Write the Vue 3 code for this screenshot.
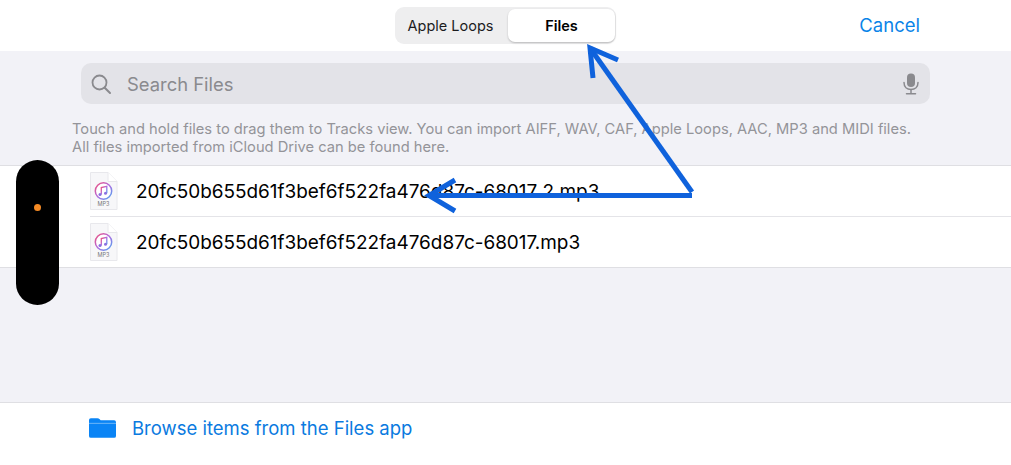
<template>
  <div class="screen">
    <header class="topbar">
      <div class="segment">
        <div class="seg-item">Apple Loops</div>
        <div class="seg-item active">Files</div>
      </div>
      <button class="cancel">Cancel</button>
    </header>

    <main class="content">
      <div class="search">
        <svg class="search-icon" width="22" height="22" viewBox="0 0 22 22" fill="none">
          <circle cx="9.5" cy="9.5" r="7" stroke="#8a8a8e" stroke-width="1.8" />
          <path d="M14.7 14.7 L20 20" stroke="#8a8a8e" stroke-width="2" stroke-linecap="round" />
        </svg>
        <span class="search-text">Search Files</span>
        <svg class="mic" width="16" height="22" viewBox="0 0 16 22" fill="none">
          <rect x="4" y="0.5" width="8" height="13.5" rx="4" fill="#8a8a8e" />
          <path d="M1 9.5 C1 14 4 16.5 8 16.5 C12 16.5 15 14 15 9.5" stroke="#8a8a8e" stroke-width="1.5" stroke-linecap="round" />
          <path d="M8 16.5 V20.5 M3.5 20.8 H12.5" stroke="#8a8a8e" stroke-width="1.5" stroke-linecap="round" />
        </svg>
      </div>

      <p class="hint">
        Touch and hold files to drag them to Tracks view. You can import AIFF, WAV, CAF, Apple Loops, AAC, MP3 and MIDI files.<br>
        All files imported from iCloud Drive can be found here.
      </p>

      <ul class="files">
        <li v-for="name in files" :key="name" class="file-row">
          <svg class="file-icon" width="28" height="38" viewBox="0 0 28 38">
            <defs>
              <linearGradient id="note" x1="0" y1="0" x2="1" y2="1">
                <stop offset="0" stop-color="#f0507a" />
                <stop offset="0.5" stop-color="#b06ae0" />
                <stop offset="1" stop-color="#4aa8f0" />
              </linearGradient>
            </defs>
            <path d="M0.5 0.5 H18 L27 9.5 V37.5 H0.5 Z" fill="#f7f7f9" stroke="#e8e8ec" />
            <path d="M18 0.5 V9.5 H27" fill="#ffffff" stroke="#e8e8ec" />
            <circle cx="13.5" cy="19" r="8.2" fill="#fff" stroke="url(#note)" stroke-width="1.5" />
            <path d="M11.3 22.5 V15.6 L16.8 14.4 V21.2" fill="none" stroke="url(#note)" stroke-width="1.3" />
            <circle cx="10" cy="22.5" r="1.5" fill="#8a70e0" />
            <circle cx="15.5" cy="21.2" r="1.5" fill="#8a70e0" />
            <text x="13.5" y="33.5" class="mp3">MP3</text>
          </svg>
          <span class="file-name">{{ name }}</span>
        </li>
      </ul>
    </main>

    <footer class="browse">
      <svg width="27" height="20" viewBox="0 0 29 21">
        <path d="M0 2 Q0 0 2 0 H9 Q10.5 0 11.5 1.2 L12.5 2.2 H27 Q29 2.2 29 4.2 V19 Q29 21 27 21 H2 Q0 21 0 19 Z" fill="#0a84f5" />
        <path d="M0 5.5 H29" stroke="#8ec8fb" stroke-width="0.8" />
      </svg>
      <span class="browse-text">Browse items from the Files app</span>
    </footer>

    <div class="pill"><span class="dot"></span></div>

    <svg class="arrows" width="1011" height="465" viewBox="0 0 1011 465" fill="none">
      <path d="M692 195.5 L429 195.5" />
      <path d="M455 180 L429 195.5 L455 211" />
      <path d="M692 192 L590 48" />
      <path d="M618 60 L590 48 L593 78" />
    </svg>
  </div>
</template>

<script setup>
const files = [
  '20fc50b655d61f3bef6f522fa476d87c-68017 2.mp3',
  '20fc50b655d61f3bef6f522fa476d87c-68017.mp3'
]
</script>

<style>
html, body {
  margin: 0;
  background: #fff;
}
</style>

<style scoped>
.screen {
  position: relative;
  width: 1011px;
  height: 465px;
  overflow: hidden;
  display: flex;
  flex-direction: column;
  background: #fff;
  font-family: Inter, "Noto Sans", sans-serif;
}

.topbar {
  height: 51px;
  flex: none;
  display: flex;
  justify-content: center;
  align-items: flex-start;
  position: relative;
  background: #fff;
}

.segment {
  margin-top: 7px;
  width: 221px;
  height: 37px;
  box-sizing: border-box;
  padding: 2px 1px 2px 0;
  display: flex;
  border-radius: 9px;
  background: #eeeeef;
}

.seg-item {
  display: flex;
  align-items: center;
  justify-content: center;
  width: 113px;
  padding-right: 2px;
  box-sizing: border-box;
  font-size: 14.5px;
  color: #1c1c1e;
}

.seg-item.active {
  width: 107px;
  padding-right: 0;
  font-weight: 600;
  color: #000;
  background: #fff;
  border-radius: 7px;
  box-shadow: 0 1px 2px rgba(0, 0, 0, 0.22);
}

.cancel {
  position: absolute;
  right: 91px;
  top: 14px;
  padding: 0;
  border: none;
  background: none;
  font-family: inherit;
  font-size: 18.5px;
  color: #0a84e8;
}

.content {
  flex: 1;
  background: #f2f2f7;
  padding-top: 12px;
}

.search {
  margin: 0 81px;
  height: 41px;
  display: flex;
  align-items: center;
  padding: 0 11px 0 9px;
  border-radius: 10px;
  background: #e3e3e8;
}

.search-icon {
  flex: none;
}

.search-text {
  flex: 1;
  margin-left: 15px;
  font-size: 18.4px;
  color: #8a8a8e;
}

.mic {
  flex: none;
}

.hint {
  margin: 16px 0 0 72px;
  font-size: 14.7px;
  line-height: 18px;
  color: #949499;
  white-space: nowrap;
}

.files {
  list-style: none;
  margin: 9px 0 0;
  padding: 0;
  background: #fff;
  border-top: 1px solid #dfdfe3;
  border-bottom: 1px solid #dfdfe3;
}

.file-row {
  height: 50px;
  margin-left: 90px;
  display: flex;
  align-items: center;
}

.file-row + .file-row {
  border-top: 1px solid #e4e4e8;
}

.file-icon {
  flex: none;
}

.mp3 {
  font-size: 5.5px;
  fill: #77777c;
  text-anchor: middle;
}

.file-name {
  margin-left: 18px;
  font-size: 18.93px;
  color: #000;
  white-space: nowrap;
}

.browse {
  height: 63px;
  flex: none;
  box-sizing: border-box;
  border-top: 1px solid #dfdfe3;
  padding: 0 0 12px 89px;
  display: flex;
  align-items: center;
  gap: 16px;
  background: #fff;
}

.browse-text {
  font-size: 18.5px;
  color: #0a7ae0;
}

.pill {
  position: absolute;
  left: 16px;
  top: 160px;
  width: 43px;
  height: 145px;
  border-radius: 22px;
  background: #000;
}

.dot {
  position: absolute;
  left: 18px;
  top: 44px;
  width: 7px;
  height: 7px;
  border-radius: 50%;
  background: #f58a24;
}

.arrows {
  position: absolute;
  left: 0;
  top: 0;
  pointer-events: none;
}

.arrows path {
  stroke: #0f62dc;
  stroke-width: 5;
}
</style>
